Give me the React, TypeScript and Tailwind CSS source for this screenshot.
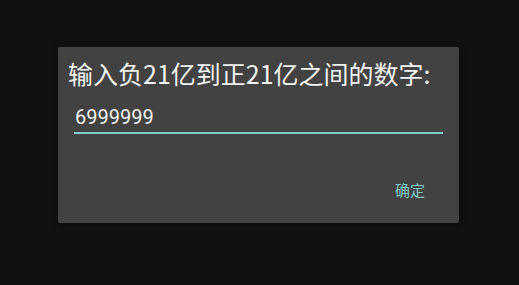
export default function App() {
  return (
    <div className="w-[519px] h-[285px] bg-[#111111] pt-[47px] pl-[58px]">
      <div
        className="w-[401px] h-[176px] bg-[#424242] rounded-[2px] flex flex-col shadow-[0_2px_6px_rgba(0,0,0,0.5)]"
        style={{ fontFamily: '"Noto Sans CJK SC", "Noto Sans", sans-serif' }}
      >
        <div className="pt-[14px] pl-[10px] text-[25px] leading-[25px] text-[#f2f2f2] whitespace-nowrap">
          输入负21亿到正21亿之间的数字:
        </div>
        <div className="mt-[19px] mx-[16px]">
          <div
            className="pl-[1px] text-[20px] leading-[24px] text-[#f2f2f2]"
            style={{ fontFamily: 'Roboto, "Noto Sans", sans-serif' }}
          >
            6999999
          </div>
          <div className="mt-[3px] h-[2px] bg-[#80cbc4]" />
        </div>
        <div className="mt-[48px] flex justify-end pr-[34px]">
          <div className="text-[15px] leading-[15px] text-[#80cbc4]">确定</div>
        </div>
      </div>
    </div>
  );
}
